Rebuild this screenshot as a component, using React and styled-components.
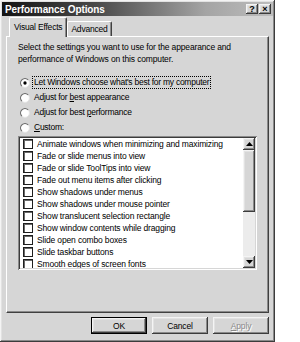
import React from 'react'
import styled, { createGlobalStyle } from 'styled-components'

const GlobalStyle = createGlobalStyle`
  body {
    margin: 0;
    background: #ffffff;
    font-family: "Liberation Sans", Arial, sans-serif;
  }
`

const raised = `
  box-shadow: inset -1px -1px #3c3c3c, inset 1px 1px #f4f4f4, inset -2px -2px #8a8a8a, inset 2px 2px #e2e2e2;
`

const Window = styled.div`
  width: 275px;
  height: 342px;
  box-sizing: border-box;
  padding: 2px;
  background: #d6d6d6;
  display: flex;
  flex-direction: column;
  ${raised}
`

const TitleBar = styled.div`
  height: 14px;
  display: flex;
  align-items: center;
  padding: 0 2px 0 3px;
  background: linear-gradient(to right, #141414 0%, #4a4a4a 35%, #a4a4a4 75%, #bdbdbd 100%);
`

const Title = styled.div`
  flex: 1;
  color: #fff;
  font-weight: bold;
  font-size: 10px;
  letter-spacing: -0.1px;
`

const CaptionButton = styled.div`
  width: 12px;
  height: 10px;
  margin-left: ${p => p.$gap || 0}px;
  background: #d6d6d6;
  ${raised}
  display: flex;
  align-items: center;
  justify-content: center;
  font-weight: bold;
  font-size: 9px;
  color: #000;
`

const TabRow = styled.div`
  display: flex;
  align-items: flex-end;
  margin: 4px 0 0 7px;
  height: 16px;
  position: relative;
  z-index: 1;
`

const Tab = styled.div`
  height: ${p => (p.$active ? 17 : 14)}px;
  margin-bottom: ${p => (p.$active ? -1 : 0)}px;
  padding: 0 ${p => (p.$active ? 4 : 3)}px;
  padding-bottom: ${p => (p.$active ? 2 : 0)}px;
  display: flex;
  align-items: center;
  font-size: 8.5px;
  letter-spacing: -0.2px;
  background: #d6d6d6;
  border-top: 1px solid #fff;
  border-left: 1px solid #fff;
  border-right: 1px solid #404040;
  box-shadow: inset -1px 0 #8a8a8a;
  border-radius: 2px 2px 0 0;
`

const Panel = styled.div`
  margin: 0 4px;
  height: 277px;
  box-sizing: border-box;
  padding: 4px 0 0 11px;
  border-top: 1px solid #fff;
  border-left: 1px solid #fff;
  border-right: 1px solid #404040;
  border-bottom: 1px solid #404040;
  box-shadow: inset -1px -1px #8a8a8a;
  display: flex;
  flex-direction: column;
  font-size: 8.5px;
  letter-spacing: -0.15px;
  color: #000;
`

const Description = styled.div`
  line-height: 12px;
  width: 240px;
`

const RadioGroup = styled.div`
  margin-top: 10px;
  display: flex;
  flex-direction: column;
`

const RadioRow = styled.div`
  height: 15px;
  display: flex;
  align-items: center;
  padding-left: 2px;
`

const RadioLabel = styled.span`
  margin-left: 3px;
  padding: 0 1px;
  outline: ${p => (p.$focus ? '1px dotted #000' : 'none')};
  line-height: 11px;
  letter-spacing: -0.25px;
`

const Key = styled.span`
  text-decoration: underline;
`

const ListBox = styled.div`
  margin-top: 1px;
  width: 239px;
  height: 134px;
  box-sizing: border-box;
  background: #fff;
  box-shadow: inset 1px 1px #8a8a8a, inset -1px -1px #fff, inset 2px 2px #3c3c3c, inset -2px -2px #d6d6d6;
  padding: 2px;
  display: flex;
`

const Items = styled.div`
  flex: 1;
  padding-left: 3px;
  overflow: hidden;
`

const Item = styled.div`
  height: 12px;
  display: flex;
  align-items: center;
  white-space: nowrap;
`

const Check = styled.span`
  width: 10px;
  height: 10px;
  box-sizing: border-box;
  border: 1px solid #1e1e1e;
  box-shadow: inset 1px 1px #6a6a6a;
  background: #fff;
  margin-right: 4px;
  flex: none;
`

const ScrollBar = styled.div`
  width: 12px;
  display: flex;
  flex-direction: column;
  background: #ececec;
`

const ScrollButton = styled.div`
  height: 12px;
  background: #d6d6d6;
  ${raised}
  display: flex;
  align-items: center;
  justify-content: center;
`

const Thumb = styled.div`
  height: 62px;
  background: #d6d6d6;
  ${raised}
`

const Track = styled.div`
  flex: 1;
`

const ButtonRow = styled.div`
  display: flex;
  justify-content: flex-end;
  gap: 5px;
  margin: 4px 4px 0 0;
`

const Button = styled.div`
  width: 56px;
  height: 17px;
  box-sizing: border-box;
  display: flex;
  align-items: center;
  justify-content: center;
  font-size: 8.5px;
  letter-spacing: -0.15px;
  background: #d6d6d6;
  color: ${p => (p.$disabled ? '#8a8a8a' : '#000')};
  text-shadow: ${p => (p.$disabled ? '1px 1px #fff' : 'none')};
  border: ${p => (p.$default ? '1px solid #000' : 'none')};
  ${raised}
`

const Arrow = ({ down }) => (
  <svg width="7" height="4" viewBox="0 0 7 4">
    <polygon points={down ? '0,0 7,0 3.5,4' : '0,4 7,4 3.5,0'} fill="#000" />
  </svg>
)

const Radio = ({ checked }) => (
  <svg width="10" height="10" viewBox="0 0 12 12">
    <circle cx="6" cy="6" r="5.3" fill="#fff" stroke="#e4e4e4" strokeWidth="1.2" />
    <path d="M9.75 2.25 A5.3 5.3 0 0 0 2.25 9.75" stroke="#6e6e6e" strokeWidth="1.4" fill="none" />
    {checked && <circle cx="6" cy="6" r="2" fill="#000" />}
  </svg>
)

const effects = [
  'Animate windows when minimizing and maximizing',
  'Fade or slide menus into view',
  'Fade or slide ToolTips into view',
  'Fade out menu items after clicking',
  'Show shadows under menus',
  'Show shadows under mouse pointer',
  'Show translucent selection rectangle',
  'Show window contents while dragging',
  'Slide open combo boxes',
  'Slide taskbar buttons',
  'Smooth edges of screen fonts',
]

export default function App() {
  return (
    <>
      <GlobalStyle />
      <Window>
        <TitleBar>
          <Title>Performance Options</Title>
          <CaptionButton>?</CaptionButton>
          <CaptionButton $gap={1}>×</CaptionButton>
        </TitleBar>
        <TabRow>
          <Tab $active>Visual Effects</Tab>
          <Tab>Advanced</Tab>
        </TabRow>
        <Panel>
          <Description>
            Select the settings you want to use for the appearance and performance of Windows on this computer.
          </Description>
          <RadioGroup>
            <RadioRow>
              <Radio checked />
              <RadioLabel $focus>Let Windows choose what's best for my computer</RadioLabel>
            </RadioRow>
            <RadioRow>
              <Radio />
              <RadioLabel>Adjust for <Key>b</Key>est appearance</RadioLabel>
            </RadioRow>
            <RadioRow>
              <Radio />
              <RadioLabel>Adjust for best <Key>p</Key>erformance</RadioLabel>
            </RadioRow>
            <RadioRow>
              <Radio />
              <RadioLabel><Key>C</Key>ustom:</RadioLabel>
            </RadioRow>
          </RadioGroup>
          <ListBox>
            <Items>
              {effects.map(e => (
                <Item key={e}>
                  <Check />
                  {e}
                </Item>
              ))}
            </Items>
            <ScrollBar>
              <ScrollButton><Arrow /></ScrollButton>
              <Thumb />
              <Track />
              <ScrollButton><Arrow down /></ScrollButton>
            </ScrollBar>
          </ListBox>
        </Panel>
        <ButtonRow>
          <Button $default>OK</Button>
          <Button>Cancel</Button>
          <Button $disabled><span><Key>A</Key>pply</span></Button>
        </ButtonRow>
      </Window>
    </>
  )
}
